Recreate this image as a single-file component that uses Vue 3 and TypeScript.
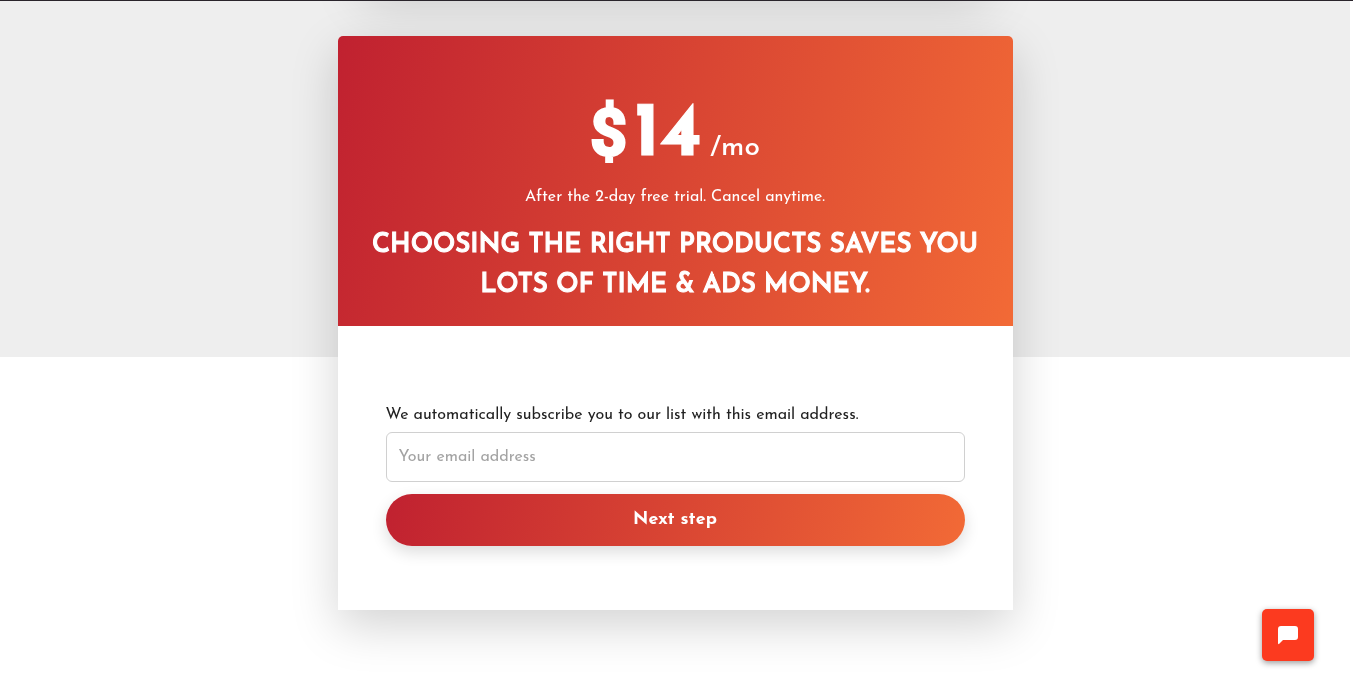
<script setup lang="ts">
import { ref } from 'vue'

const email = ref<string>('')
</script>

<template>
  <div class="page">
    <div class="previous-card"></div>
    <main class="card">
      <header class="pricing">
        <p class="price">
          <strong><span class="currency">$</span>14</strong> <span class="period">/mo</span>
        </p>
        <p class="trial">After the 2-day free trial. Cancel anytime.</p>
        <h2>Choosing the right products saves you lots of time &amp; ads money.</h2>
      </header>
      <form class="signup" @submit.prevent>
        <label for="email">We automatically subscribe you to our list with this email address.</label>
        <input id="email" v-model="email" type="email" placeholder="Your email address" />
        <button class="next" type="submit">Next step</button>
      </form>
    </main>
    <button class="chat" type="button" aria-label="Open chat">
      <svg viewBox="0 0 20 19" width="20" height="19" aria-hidden="true">
        <path d="M3 0H17Q20 0 20 3V11Q20 14 17 14H5L1 18Q0 18.5 0 17V3Q0 0 3 0Z" fill="#fff" />
      </svg>
    </button>
  </div>
</template>

<style>
html,
body {
  background: #fff;
}
</style>

<style scoped>
* {
  box-sizing: border-box;
}

.page {
  position: relative;
  min-height: 100vh;
  margin-right: 3px;
  overflow: hidden;
  background: linear-gradient(#eee, #eee) 0 0 / 100% 357px no-repeat;
  font-family: "Josefin Sans", Lato, "Open Sans", sans-serif;
  font-size: 16px;
}

.page::before {
  content: "";
  position: fixed;
  top: 0;
  left: 0;
  right: 0;
  height: 1px;
  background: #29242b;
}

.previous-card,
.card {
  width: 50%;
  margin: 0 auto;
  box-shadow: 0 16px 48px rgba(0, 0, 0, 0.175);
}

.previous-card {
  width: 46%;
  height: 200px;
  margin-top: -216px;
  margin-bottom: 52px;
}

.card {
  position: relative;
  margin-bottom: 84px;
  border-radius: 5px 5px 0 0;
  background: #fff;
}

.pricing {
  padding: 52px 32px 20px;
  border-radius: 5px 5px 0 0;
  background: linear-gradient(105deg, #c02130, #f26a36);
  color: #fff;
  text-align: center;
}

.pricing p,
.pricing h2 {
  margin: 0;
}

.price {
  display: flex;
  align-items: baseline;
  justify-content: center;
  gap: 8px;
  height: 95px;
  line-height: 96px;
}

.price strong {
  font-size: 76px;
  font-weight: 700;
  -webkit-text-stroke: 1px #fff;
}

.currency {
  margin-right: 7px;
  font-family: Roboto, sans-serif;
  font-size: 64px;
  line-height: 1;
  -webkit-text-stroke: 3px #fff;
}

.period {
  font-size: 28px;
  font-weight: 500;
}

.trial {
  padding-bottom: 15px;
  line-height: 28px;
}

.pricing h2 {
  font-size: 26px;
  font-weight: 600;
  -webkit-text-stroke: 1px #fff;
  line-height: 40px;
  text-transform: uppercase;
}

.signup {
  display: flex;
  flex-direction: column;
  padding: 77px 48px 64px;
}

.signup label {
  padding-bottom: 5px;
  color: #212121;
  line-height: 24px;
}

.signup input {
  height: 50px;
  padding: 0 12px;
  border: 1px solid #d0d0d0;
  border-radius: 6px;
  background: #fff;
  color: #212121;
  font: inherit;
}

.signup input::placeholder {
  color: #a3a3a3;
  opacity: 1;
}

.next {
  height: 52px;
  margin-top: 12px;
  padding: 0 24px;
  border: 0;
  border-radius: 26px;
  background: linear-gradient(105deg, #c02130, #f26a36);
  box-shadow: 0 6px 16px rgba(0, 0, 0, 0.14);
  color: #fff;
  font: inherit;
  font-size: 18px;
  font-weight: 700;
  cursor: pointer;
}

.chat {
  position: fixed;
  right: 39px;
  bottom: 36px;
  display: flex;
  align-items: center;
  justify-content: center;
  width: 52px;
  height: 52px;
  padding: 0;
  border: 0;
  border-radius: 5px;
  background: #fc3a1f;
  box-shadow: 0 2px 6px rgba(0, 0, 0, 0.4);
  cursor: pointer;
}
</style>
